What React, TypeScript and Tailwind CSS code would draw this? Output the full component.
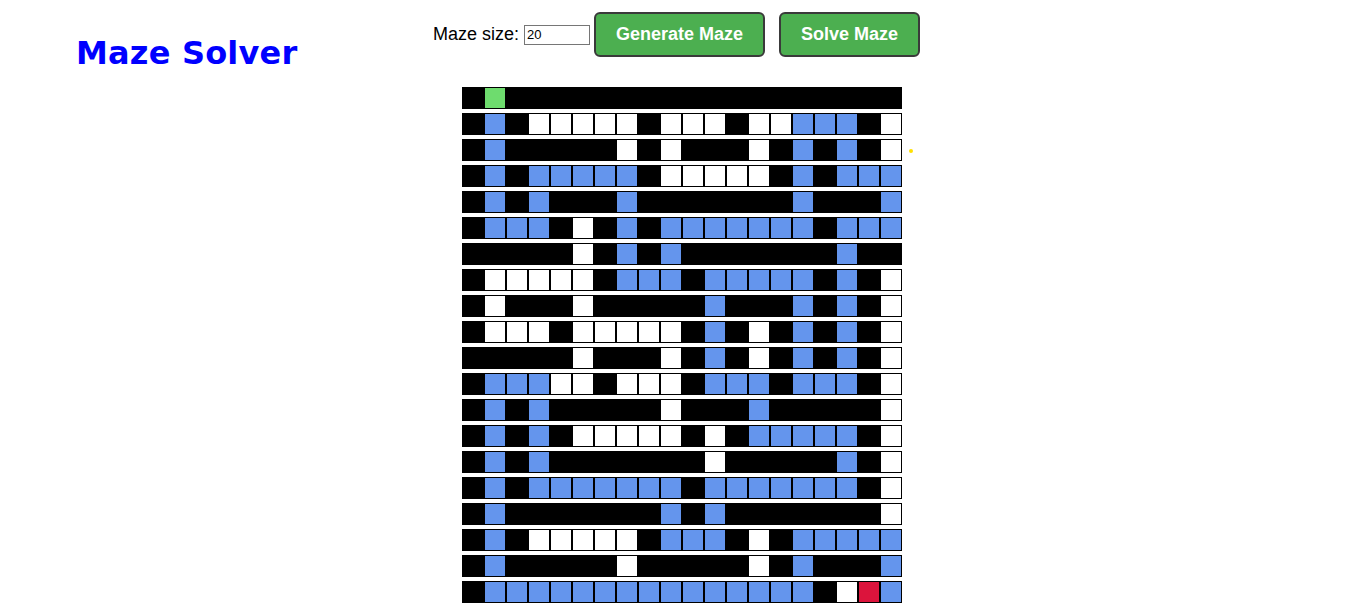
import React from 'react';

// '#' wall, '.' open, 'b' path, 'g' start, 'r' end
const maze = [
  '#g##################',
  '#b#.....#...#..bbb#.',
  '#b#####.#.###.#b#b#.',
  '#b#bbbbb#.....#b#bbb',
  '#b#b###b#######b###b',
  '#bbb#.#b#bbbbbbb#bbb',
  '#####.#b#b#######b##',
  '#.....#bbb#bbbbb#b#.',
  '#.###.#####b###b#b#.',
  '#...#.....#b#.#b#b#.',
  '#####.###.#b#.#b#b#.',
  '#bbb..#...#bbb#bbb#.',
  '#b#b#####.###b#####.',
  '#b#b#.....#.#bbbbb#.',
  '#b#b#######.#####b#.',
  '#b#bbbbbbb#bbbbbbb#.',
  '#b#######b#b#######.',
  '#b#.....#bbb#.#bbbbb',
  '#b#####.#####.#b###b',
  '#bbbbbbbbbbbbbbb#.rb',
];

const cellColor: Record<string, string> = {
  '#': 'bg-black',
  '.': 'bg-white',
  b: 'bg-[#6495ed]',
  g: 'bg-[#6edc6e]',
  r: 'bg-[#dc143c]',
};

function Cell({ kind }: { kind: string }) {
  return <div className={`w-[22px] h-[22px] border border-black ${cellColor[kind]}`} />;
}

export default function App() {
  return (
    <div className="min-h-screen bg-white font-['Liberation_Sans',Arial,sans-serif] text-black">
      {/* Header */}
      <div className="grid grid-cols-[1fr_auto_1fr] items-start">
        <h1 className="pl-[76px] pt-[34px] text-[32px] leading-[38px] font-bold text-[#0000ff] font-['DejaVu_Sans',sans-serif] tracking-[0.2px]">
          Maze Solver
        </h1>
        <div className="flex items-center pt-[12px] pr-[12px]">
          <label className="text-[18px] leading-[21px] mr-[5px]">Maze size:</label>
          <input
            type="text"
            defaultValue="20"
            className="w-[66px] h-[20px] border border-[#767676] px-[2px] text-[13px] font-['Liberation_Sans',Arial,sans-serif] outline-none"
          />
          <button className="ml-[4px] h-[45px] px-[20px] bg-[#4caf50] text-white text-[18px] font-bold border-2 border-[#3a3a3a] rounded-[6px]">
            Generate Maze
          </button>
          <button className="ml-[14px] h-[45px] px-[20px] bg-[#4caf50] text-white text-[18px] font-bold border-2 border-[#3a3a3a] rounded-[6px]">
            Solve Maze
          </button>
        </div>
        <div />
      </div>

      {/* Maze */}
      <div className="flex justify-center mt-[15px] pr-[1px]">
        <div className="flex flex-col gap-[4px]">
          {maze.map((row, r) => (
            <div key={r} className="relative flex">
              {row.split('').map((c, i) => (
                <Cell key={i} kind={c} />
              ))}
              {r === 2 && (
                <div className="absolute left-[447px] top-[10px] w-[4px] h-[4px] rounded-full bg-[#ffe000]" />
              )}
            </div>
          ))}
        </div>
      </div>
    </div>
  );
}
